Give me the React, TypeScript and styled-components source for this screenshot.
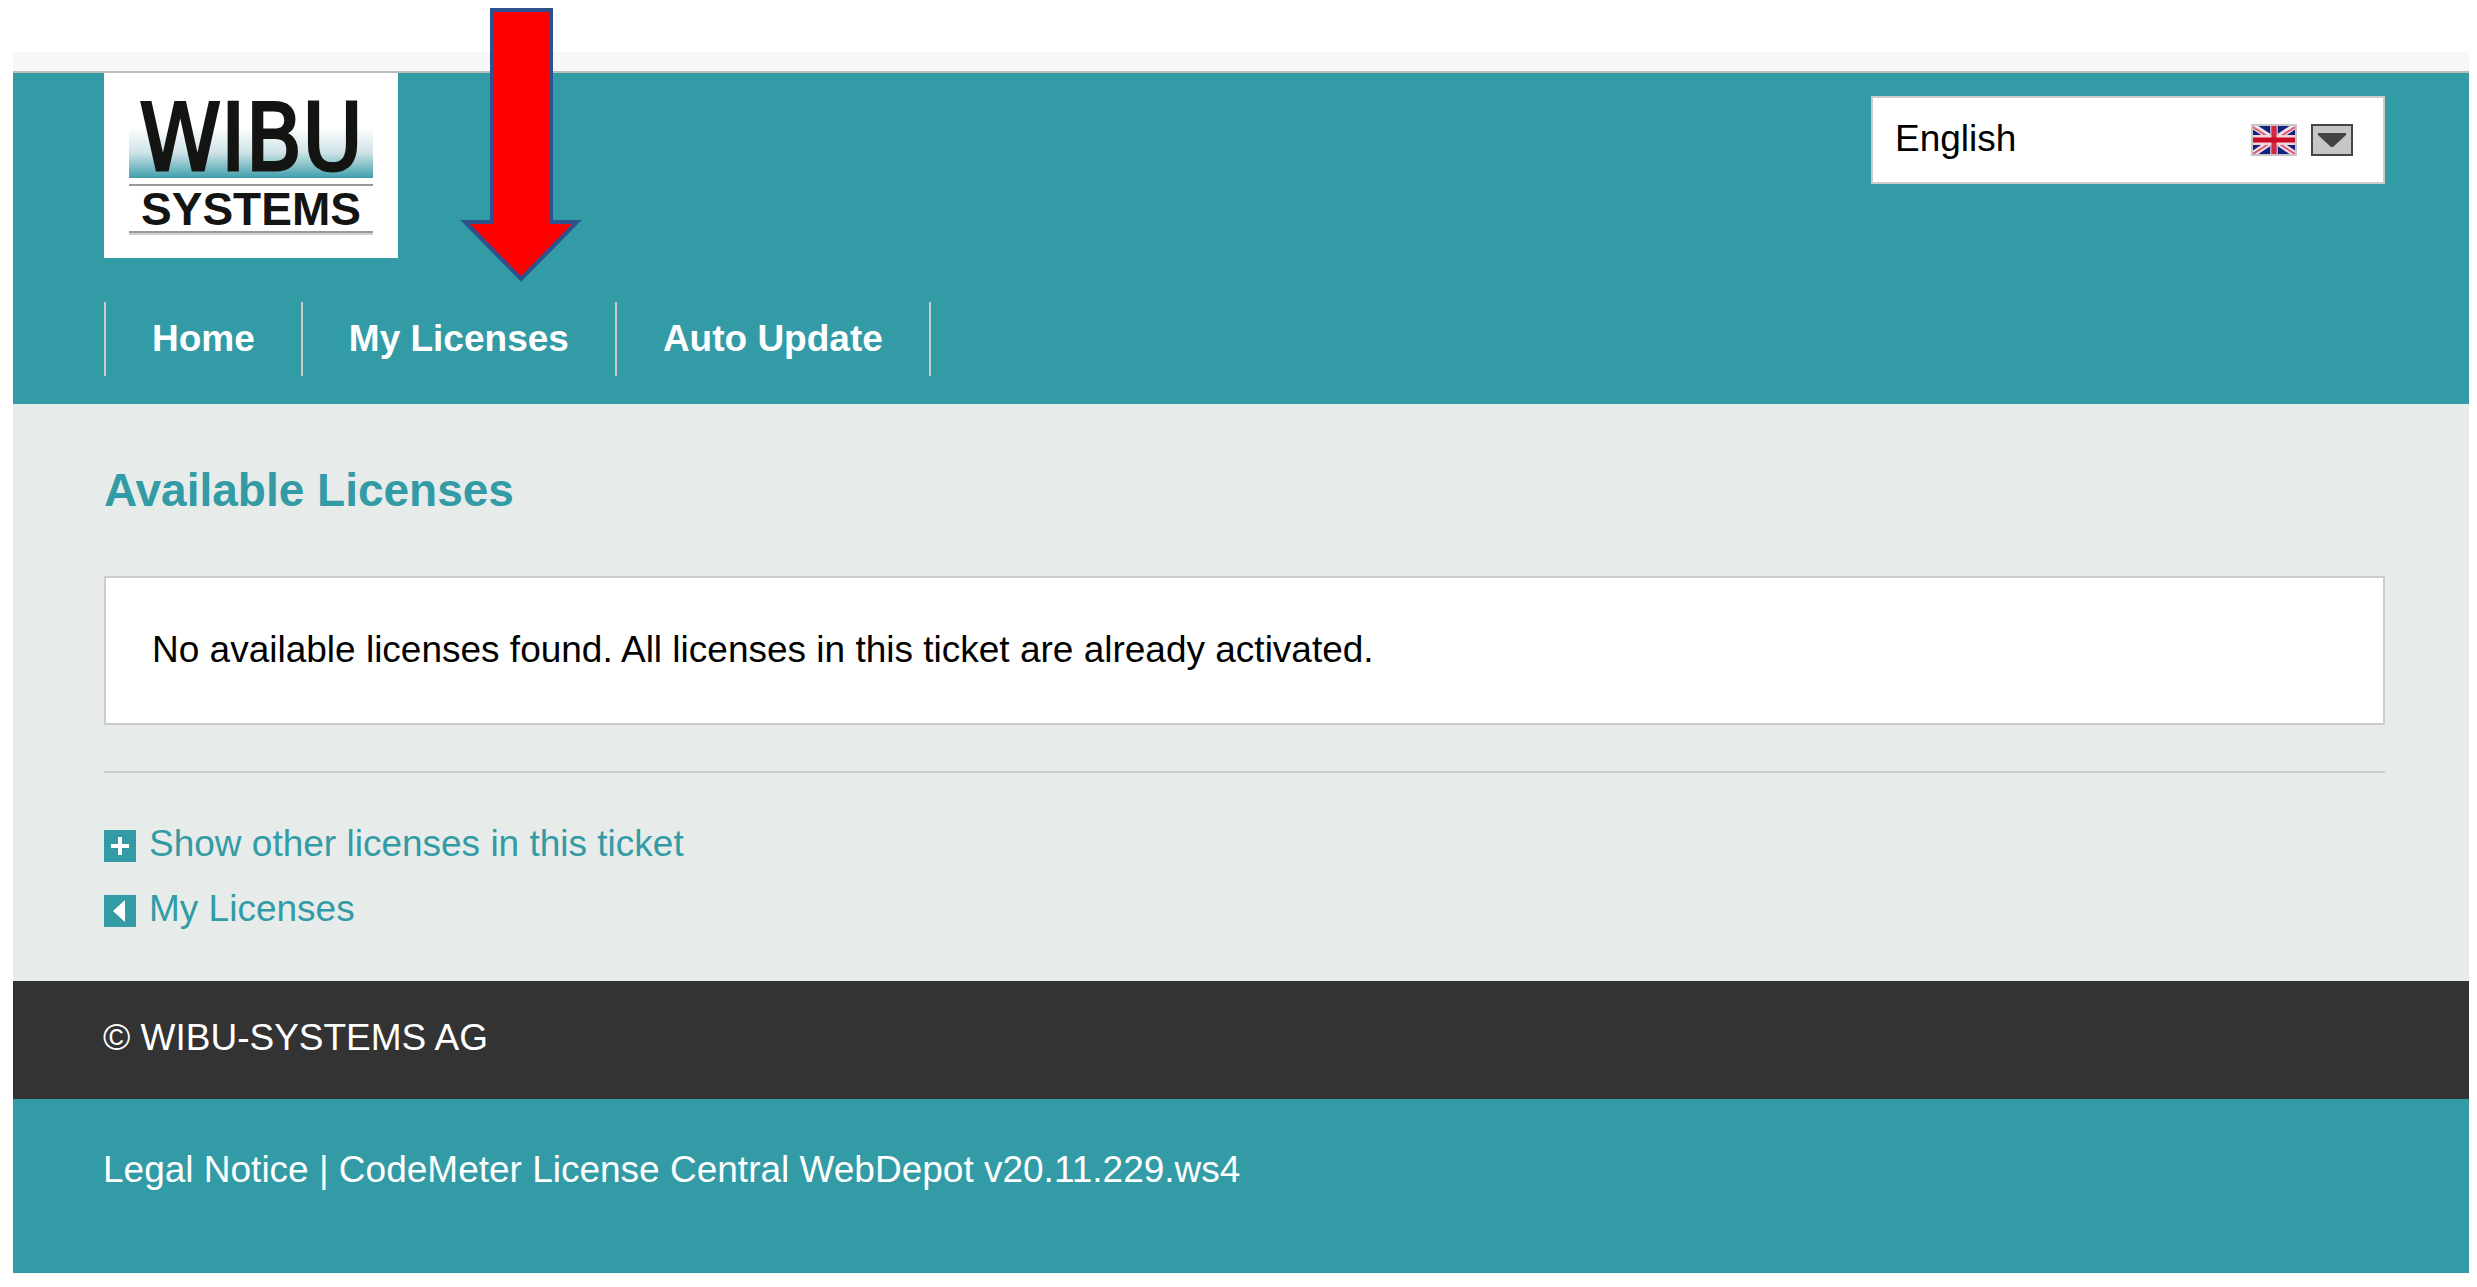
import React from "react";
import styled, { createGlobalStyle } from "styled-components";

const teal = "#339ba5";
const rule = "#cccccc";

const GlobalStyle = createGlobalStyle`
  * { box-sizing: border-box; }
  body {
    margin: 0;
    background: #ffffff;
    color: #000000;
    font-family: "Liberation Sans", Arial, sans-serif;
    font-size: 37px;
    line-height: 44px;
  }
`;

const Page = styled.div`
  position: relative;
  padding: 52px 8px 0 13px;
`;

const TopStrip = styled.div`
  height: 21px;
  background: #f7f7f7;
  border-bottom: 2px solid #bcbcbc;
`;

const Header = styled.header`
  padding: 0 84px 28px 91px;
  background: ${teal};
`;

const Masthead = styled.div`
  display: flex;
  justify-content: space-between;
  align-items: flex-start;
`;

const LogoLink = styled.a`
  display: block;
  background: #ffffff;

  svg { display: block; }
`;

const LanguageBox = styled.div`
  position: relative;
  width: 514px;
  height: 88px;
  margin-top: 23px;
`;

const LanguageSelect = styled.select`
  appearance: none;
  width: 100%;
  height: 100%;
  padding: 0 140px 2px 22px;
  border: 2px solid ${rule};
  border-radius: 0;
  background: #ffffff;
  color: #000000;
  font: inherit;
`;

const LanguageIcons = styled.span`
  position: absolute;
  top: 28px;
  right: 32px;
  display: flex;
  gap: 14px;
  pointer-events: none;
`;

const Nav = styled.nav`
  display: flex;
  margin-top: 44px;
`;

const NavLink = styled.a`
  padding: 15px 46px;
  border-left: 2px solid ${rule};
  color: #ffffff;
  font-weight: bold;
  text-decoration: none;

  &:last-child { border-right: 2px solid ${rule}; }
`;

const Main = styled.main`
  padding: 59px 84px 50px 91px;
  background: #e7ecea;
`;

const Title = styled.h1`
  margin: 0 0 59px;
  color: ${teal};
  font-size: 46px;
  line-height: 54px;
`;

const Notice = styled.p`
  margin: 0;
  padding: 50px 46px 51px;
  border: 2px solid ${rule};
  background: #ffffff;
`;

const Divider = styled.hr`
  height: 2px;
  margin: 46px 0 49px;
  border: 0;
  background: ${rule};
`;

const Actions = styled.div`
  display: flex;
  flex-direction: column;
  align-items: flex-start;
  gap: 21px;
`;

const ActionLink = styled.a`
  display: flex;
  align-items: center;
  gap: 13px;
  color: ${teal};
  text-decoration: none;

  svg { display: block; margin-top: 4px; }
`;

const Copyright = styled.div`
  padding: 35px 84px 39px 90px;
  background: #333333;
  color: #ffffff;
`;

const Legal = styled.footer`
  padding: 49px 84px 81px 90px;
  background: ${teal};
  color: #ffffff;

  a { color: inherit; text-decoration: none; }
`;

const Pointer = styled.svg`
  position: absolute;
  top: 8px;
  left: 459px;
  pointer-events: none;
`;

function Logo() {
  return (
    <svg width="294" height="185" viewBox="0 0 294 185" role="img" aria-label="WIBU Systems">
      <defs>
        <linearGradient id="glow" x1="0" y1="0" x2="0" y2="1">
          <stop offset="0" stopColor="#ffffff" />
          <stop offset="0.5" stopColor="#cfe3e7" />
          <stop offset="1" stopColor="#3f9fac" />
        </linearGradient>
      </defs>
      <rect x="25" y="54" width="244" height="51" fill="url(#glow)" />
      <text
        x="147"
        y="97"
        textAnchor="middle"
        fontFamily="'DejaVu Sans Condensed', 'DejaVu Sans', sans-serif"
        fontStretch="condensed"
        fontSize="92"
        fill="#141412"
        stroke="#141412"
        strokeWidth="3"
      >
        WIBU
      </text>
      <rect x="25" y="111" width="244" height="2" fill="#999999" />
      <text
        x="147"
        y="152"
        textAnchor="middle"
        fontFamily="'Liberation Sans', Arial, sans-serif"
        fontWeight="bold"
        fontSize="46"
        fill="#141412"
      >
        SYSTEMS
      </text>
      <rect x="25" y="158" width="244" height="2" fill="#999999" />
      <rect x="25" y="160" width="244" height="2" fill="#d0d0d0" />
    </svg>
  );
}

function Flag() {
  return (
    <svg width="46" height="32" viewBox="0 0 46 32" aria-hidden="true">
      <rect width="46" height="32" fill="#c6c6c6" />
      <svg x="2" y="2" width="42" height="28" viewBox="0 0 42 28">
        <rect width="42" height="28" fill="#12227e" />
        <path d="M0 0L42 28M42 0L0 28" stroke="#f5e4ea" strokeWidth="6" />
        <path d="M0 1L17 12M42 1L25 12M0 28L17 17M42 28L25 17" stroke="#dc5a70" strokeWidth="2" />
        <path d="M21 0V28" stroke="#b9a3c4" strokeWidth="8" />
        <path d="M0 14H42" stroke="#f3d3da" strokeWidth="10" />
        <path d="M21 0V28" stroke="#d22840" strokeWidth="5" />
        <path d="M0 14H42" stroke="#c80c28" strokeWidth="5" />
      </svg>
    </svg>
  );
}

function DropIcon() {
  return (
    <svg width="42" height="32" viewBox="0 0 42 32" aria-hidden="true">
      <rect x="1" y="1" width="40" height="30" fill="#c6c6c6" stroke="#444444" strokeWidth="2" />
      <path d="M7 9H35V11L22 23H20L7 11Z" fill="#444444" />
    </svg>
  );
}

function PlusIcon() {
  return (
    <svg width="32" height="32" viewBox="0 0 32 32" aria-hidden="true">
      <rect width="32" height="32" fill={teal} />
      <path d="M16 7V25M7 16H25" stroke="#ffffff" strokeWidth="4" />
    </svg>
  );
}

function BackIcon() {
  return (
    <svg width="32" height="32" viewBox="0 0 32 32" aria-hidden="true">
      <rect width="32" height="32" fill={teal} />
      <path d="M21 5V27L9 16Z" fill="#ffffff" />
    </svg>
  );
}

export default function App() {
  return (
    <>
      <GlobalStyle />
      <Page>
        <TopStrip />
        <Header>
          <Masthead>
            <LogoLink href="#home">
              <Logo />
            </LogoLink>
            <LanguageBox>
              <LanguageSelect aria-label="Language" defaultValue="en">
                <option value="en">English</option>
              </LanguageSelect>
              <LanguageIcons>
                <Flag />
                <DropIcon />
              </LanguageIcons>
            </LanguageBox>
          </Masthead>
          <Nav>
            <NavLink href="#home">Home</NavLink>
            <NavLink href="#licenses">My Licenses</NavLink>
            <NavLink href="#update">Auto Update</NavLink>
          </Nav>
        </Header>
        <Main>
          <Title>Available Licenses</Title>
          <Notice>No available licenses found. All licenses in this ticket are already activated.</Notice>
          <Divider />
          <Actions>
            <ActionLink href="#others">
              <PlusIcon />
              Show other licenses in this ticket
            </ActionLink>
            <ActionLink href="#licenses">
              <BackIcon />
              My Licenses
            </ActionLink>
          </Actions>
        </Main>
        <Copyright>© WIBU-SYSTEMS AG</Copyright>
        <Legal>
          <a href="#legal">Legal Notice</a> | CodeMeter License Central WebDepot v20.11.229.ws4
        </Legal>
        <Pointer width="124" height="274" viewBox="0 0 124 274" aria-hidden="true">
          <path d="M33 2H92V214H118L62 271L6 214H33Z" fill="#ff0000" stroke="#2f528f" strokeWidth="4" />
        </Pointer>
      </Page>
    </>
  );
}
